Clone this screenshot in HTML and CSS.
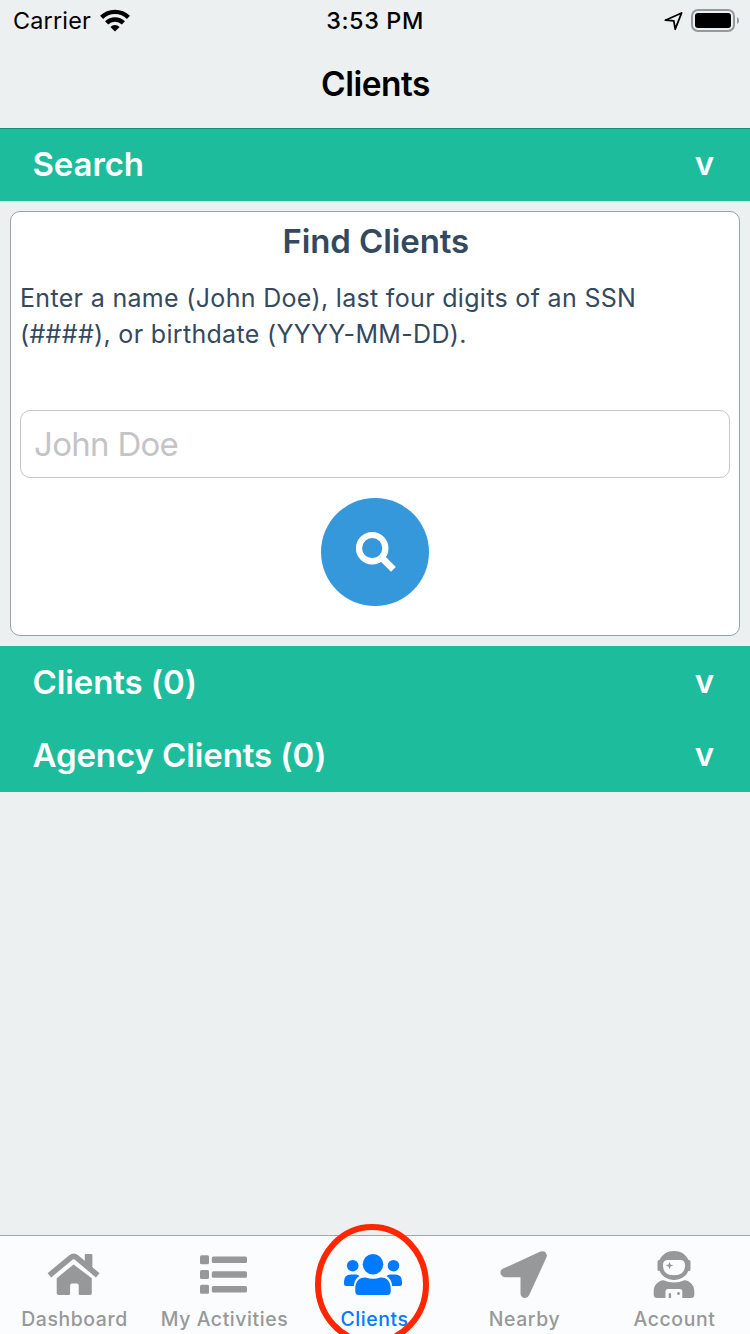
FILE: index.html
```html
<!DOCTYPE html>
<html lang="en">
<head>
<meta charset="utf-8">
<title>Clients</title>
<link rel="stylesheet" href="styles.css">
</head>
<body>
<div class="app">
  <header class="header">
    <div class="status">
      <div class="status-left"><span class="carrier">Carrier</span>
        <svg class="wifi" width="30" height="23" viewBox="0 0 30 23"><g fill="none" stroke="#000" stroke-width="4.4"><path d="M1.6 8.4a19 19 0 0 1 26.8 0"/><path d="M6.6 13.9a12 12 0 0 1 16.8 0"/></g><path d="M10.4 18a6.5 6.5 0 0 1 9.2 0L15 22.4z"/></svg>
      </div>
      <span class="time">3:53 PM</span>
      <div class="status-right">
        <svg width="20" height="20" viewBox="0 0 20 20"><path d="M1.4 9.2 17.6 2 11.2 18.2 9.8 9.8z" fill="none" stroke="#000" stroke-width="1.8" stroke-linejoin="round"/></svg>
        <svg class="battery" width="49" height="24" viewBox="0 0 49 24"><rect x="1" y="1" width="42" height="21" rx="6" fill="none" stroke="#96999b" stroke-width="2"/><rect x="4" y="4" width="36" height="15" rx="3"/><path d="M46 8c2.7 1.8 2.7 5.2 0 7z" fill="#96999b"/></svg>
      </div>
    </div>
    <h1 class="title">Clients</h1>
  </header>
  <main class="content">
    <div class="bar bar-first"><span class="bar-label">Search</span><span class="chevron">v</span></div>
    <section class="card">
      <h2 class="card-title">Find Clients</h2>
      <p class="hint">Enter a name (John Doe), last four digits of an SSN<br>(####), or birthdate (YYYY-MM-DD).</p>
      <input class="field" type="text" placeholder="John Doe">
      <button class="search" aria-label="Search">
        <svg width="42" height="42" viewBox="0 0 42 42"><circle cx="17.2" cy="17.2" r="13.2" fill="none" stroke="#fff" stroke-width="6.2"/><path d="m29.5 29.5 6.5 6.5" stroke="#fff" stroke-width="6.8" stroke-linecap="square" stroke-linejoin="round"/></svg>
      </button>
    </section>
    <div class="bar"><span class="bar-label">Clients (0)</span><span class="chevron">v</span></div>
    <div class="bar"><span class="bar-label">Agency Clients (0)</span><span class="chevron">v</span></div>
  </main>
  <nav class="tabs">
    <a class="tab">
      <svg class="home" width="54" height="50" viewBox="0 0 54 50"><path d="M3 27 24.3 9.3q3-2.4 6 0L51.3 27" transform="translate(-.6 -1.7)" fill="none" stroke="currentColor" stroke-width="5.6"/><path d="M37.8 5q0-1 1-1h5.6q1 0 1 1v14.5l-7.6-6.2z"/><path d="M9.7 28.2 26.500 14.400 44.800 28.200v15q0 1.800-1.800 1.800H33q-1.300 0-1.300-1.300v-8.500q0-1.800-1.800-1.800h-5q-1.800 0-1.800 1.800v8.500q0 1.300-1.300 1.300H11.500q-1.800 0-1.800-1.800z"/></svg>
      <span>Dashboard</span>
    </a>
    <a class="tab">
      <svg class="list" width="48" height="50" viewBox="0 0 48 50"><rect x="1" y="5.300" width="9" height="9" rx="1.500"/><rect x="1" y="20" width="9" height="9" rx="1.500"/><rect x="1" y="34.700" width="9" height="9" rx="1.500"/><rect x="12.800" y="6.500" width="35.200" height="6.500" rx="1.500"/><rect x="12.800" y="21.200" width="35.200" height="6.500" rx="1.500"/><rect x="12.800" y="35.900" width="35.200" height="6.500" rx="1.500"/></svg>
      <span>My Activities</span>
    </a>
    <a class="tab tab-active">
      <svg class="people" width="60" height="50" viewBox="0 0 60 50"><circle cx="9.700" cy="15.700" r="5.800"/><circle cx="50.500" cy="15.700" r="5.800"/><circle cx="30" cy="14.300" r="10.300"/><path d="M16.500 26c-3.500 2-5.200 5.500-5.700 10H3Q1 36 1 34v-2.500q0-7 7-7h5q2 0 3.500 1.500zM43.500 26c3.500 2 5.200 5.500 5.700 10H57q2 0 2-2v-2.500q0-7-7-7h-5q-2 0-3.500 1.500z"/><path d="M22.500 27.500q7.500 2.700 15 0c6.200-.5 10.200 4.500 10.200 10.500v3.500q0 3.500-3.500 3.500H15.800q-3.500 0-3.500-3.500V38c0-6 4-11 10.200-10.500z"/></svg>
      <span>Clients</span>
      <svg class="marker" width="114" height="122" viewBox="0 0 114 122"><ellipse cx="57" cy="60.500" rx="54" ry="57.500" fill="none" stroke="#ff2600" stroke-width="6"/></svg>
    </a>
    <a class="tab">
      <svg class="arrow" width="48" height="50" viewBox="0 0 48 50"><path d="M42.300 5.700 5 22.700H25V43.500z" stroke="currentColor" stroke-width="9" stroke-linejoin="round"/></svg>
      <span>Nearby</span>
    </a>
    <a class="tab">
      <svg class="astro" width="42" height="50" viewBox="0 0 42 50"><path fill-rule="evenodd" d="M6.500 10C9 4.300 14.500 1 21 1s12 3.300 14.500 9h.5q1.500 0 1.500 1.500v8Q37.500 21 36 21h-.7C33 26.500 27.500 30 21 30S9 26.500 6.700 21H6q-1.500 0-1.500-1.500v-8Q4.500 10 6 10zM15 10q-5 0-5 5c0 7 4 10.200 11 10.200S32 22 32 15q0-5-5-5z"/><path d="m16.500 11.700 1 2.800 2.800 1-2.800 1-1 2.800-1-2.800-2.800-1 2.800-1z"/><path fill-rule="evenodd" d="M10.500 30.200q10.500 4.800 21 0C37 30.600 41.300 35.500 41.300 41v3.500q0 3.500-3.500 3.500h-8.500v-6.500q0-2.500-2.500-2.500H15q-2.500 0-2.500 2.500V48H4.200Q.7 48 .7 44.500V41C.7 35.500 5 30.600 10.500 30.200z"/><path d="M15.700 48v-3.700q0-1.300 1.200-1.300t1.200 1.300V48z"/><circle cx="25.500" cy="43.500" r="1.500"/></svg>
      <span>Account</span>
    </a>
  </nav>
</div>
</body>
</html>
```
FILE: styles.css
```css
* { box-sizing: border-box; }
body { margin: 0; font-family: Inter, "Liberation Sans", sans-serif; }
.app { width: 750px; height: 1334px; display: flex; flex-direction: column; overflow: hidden; background: #ecf0f1; }
.header { height: 128px; flex: none; color: #000; }
.status { height: 41px; display: grid; grid-template-columns: 1fr auto 1fr; align-items: center; font-size: 23.4px; line-height: 41px; padding-left: 13px; }
.status-left { display: flex; align-items: center; gap: 9px; }
.carrier { letter-spacing: .2px; }
.time { font-weight: 500; letter-spacing: .6px; margin-left: -13px; }
.status-right { display: flex; justify-content: flex-end; align-items: center; gap: 7px; padding-right: 10px; }
.title { margin: 0; height: 87px; line-height: 86px; font-size: 33.5px; font-weight: 600; letter-spacing: -.5px; text-indent: 1px; text-align: center; }
.content { flex: 1; }
.bar { height: 73px; padding: 0 36px 0 32.5px; display: flex; align-items: center; justify-content: space-between; background: #1dbc9c; color: #fff; font-size: 33px; line-height: 73px; font-weight: 600; }
.bar-label { letter-spacing: -.1px; }
.bar-first { border-top: 1px solid #178f77; line-height: 70px; }
.bar-first .bar-label { padding-bottom: 2px; }
.chevron { font-size: 33px; padding-bottom: 3px; line-height: 1; font-weight: 600; }
.bar-first .chevron { padding-bottom: 4px; }
.card { height: 425px; margin: 10px; padding: 9px; display: flex; flex-direction: column; align-items: center; background: #fff; border: 1px solid #95a5a6; border-radius: 10px; color: #34495e; }
.card-title { margin: 0; font-size: 33px; line-height: 41px; font-weight: 600; letter-spacing: -.1px; text-indent: 1.5px; }
.hint { align-self: stretch; margin: 18px 0 0; height: 72px; font-size: 25px; line-height: 36px; letter-spacing: .32px; white-space: nowrap; }
.field { width: 710px; height: 68px; flex: none; margin-top: 58px; padding: 0 13px; background: #fff; border: 1px solid #c8c8c8; border-radius: 10px; font: 33px Inter, sans-serif; letter-spacing: -.7px; }
.field::placeholder { color: #c4c4c6; opacity: 1; }
.search { width: 108px; height: 108px; flex: none; margin-top: 20px; padding: 0 0 0 2px; border: 0; border-radius: 50%; background: #3598db; display: flex; align-items: center; justify-content: center; }
.tabs { height: 99px; flex: none; display: grid; grid-template-columns: repeat(5, 150px); background: #fbfcfd; border-top: 1px solid #a2a8aa; }
.tab { position: relative; display: flex; flex-direction: column; align-items: center; padding: 14px 1px 0 0; color: #97989a; font-size: 19.4px; line-height: 24px; gap: 7px; font-weight: 450; letter-spacing: .6px; }
.tab svg { fill: currentColor; flex: none; }
.tab .home, .tab .astro { margin-right: 1px; }
.tab .list { margin-right: 3px; }
.tab .arrow { margin-right: 2px; }
.tab-active { color: #007aff; }
.tab .people { margin-right: 3px; }
.tab .marker { position: absolute; left: 15px; top: -12px; }
```
